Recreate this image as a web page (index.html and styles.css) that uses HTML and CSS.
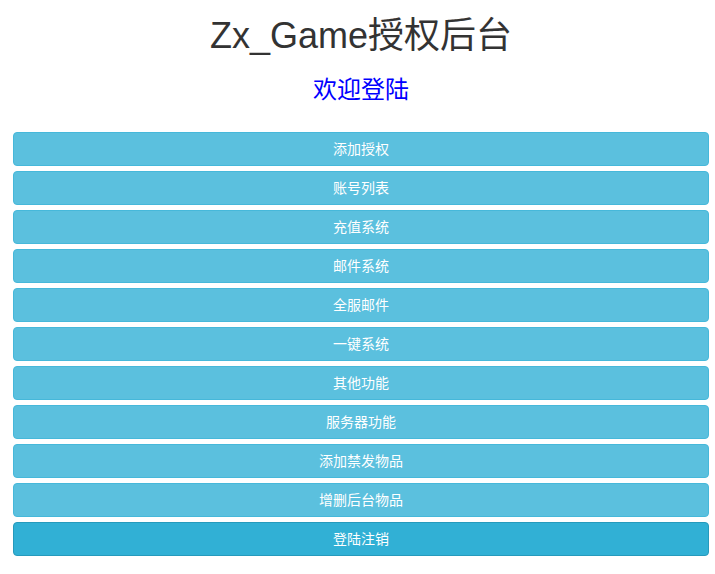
FILE: index.html
```html
<!DOCTYPE html>
<html lang="zh">
<head>
<meta charset="utf-8">
<title>Zx_Game授权后台</title>
<link rel="stylesheet" href="styles.css">
</head>
<body>
<div class="page">
  <h1 class="title">Zx_Game授权后台</h1>
  <h3 class="subtitle">欢迎登陆</h3>
  <div class="menu">
    <a class="btn">添加授权</a>
    <a class="btn">账号列表</a>
    <a class="btn">充值系统</a>
    <a class="btn">邮件系统</a>
    <a class="btn">全服邮件</a>
    <a class="btn">一键系统</a>
    <a class="btn">其他功能</a>
    <a class="btn">服务器功能</a>
    <a class="btn">添加禁发物品</a>
    <a class="btn">增删后台物品</a>
    <a class="btn btn-active">登陆注销</a>
  </div>
</div>
</body>
</html>
```

FILE: styles.css
```css
* { box-sizing: border-box; }
html, body { margin: 0; padding: 0; background: #fff; }
body {
  font-family: "Liberation Sans", "Noto Sans CJK SC", sans-serif;
  font-size: 14px;
  line-height: 1.42857;
  color: #333;
}
.page {
  padding: 0 6px 0 13px;
}
.title {
  margin: 0;
  padding-top: 16px;
  font-size: 36px;
  font-weight: 400;
  line-height: 40px;
  height: 56px;
  text-align: center;
  color: #333;
}
.subtitle {
  margin: 0;
  padding-top: 21px;
  font-size: 24px;
  font-weight: 400;
  line-height: 26px;
  height: 76px;
  text-align: center;
  color: #0000ff;
}
.menu {
  display: flex;
  flex-direction: column;
  gap: 5px;
}
.btn {
  display: block;
  height: 34px;
  padding: 6px 12px;
  font-size: 14px;
  line-height: 20px;
  text-align: center;
  color: #fff;
  background: #5bc0de;
  border: 1px solid #46b8da;
  border-radius: 4px;
  text-decoration: none;
}
.btn-active {
  background: #31b0d5;
  border-color: #269abc;
}
```
